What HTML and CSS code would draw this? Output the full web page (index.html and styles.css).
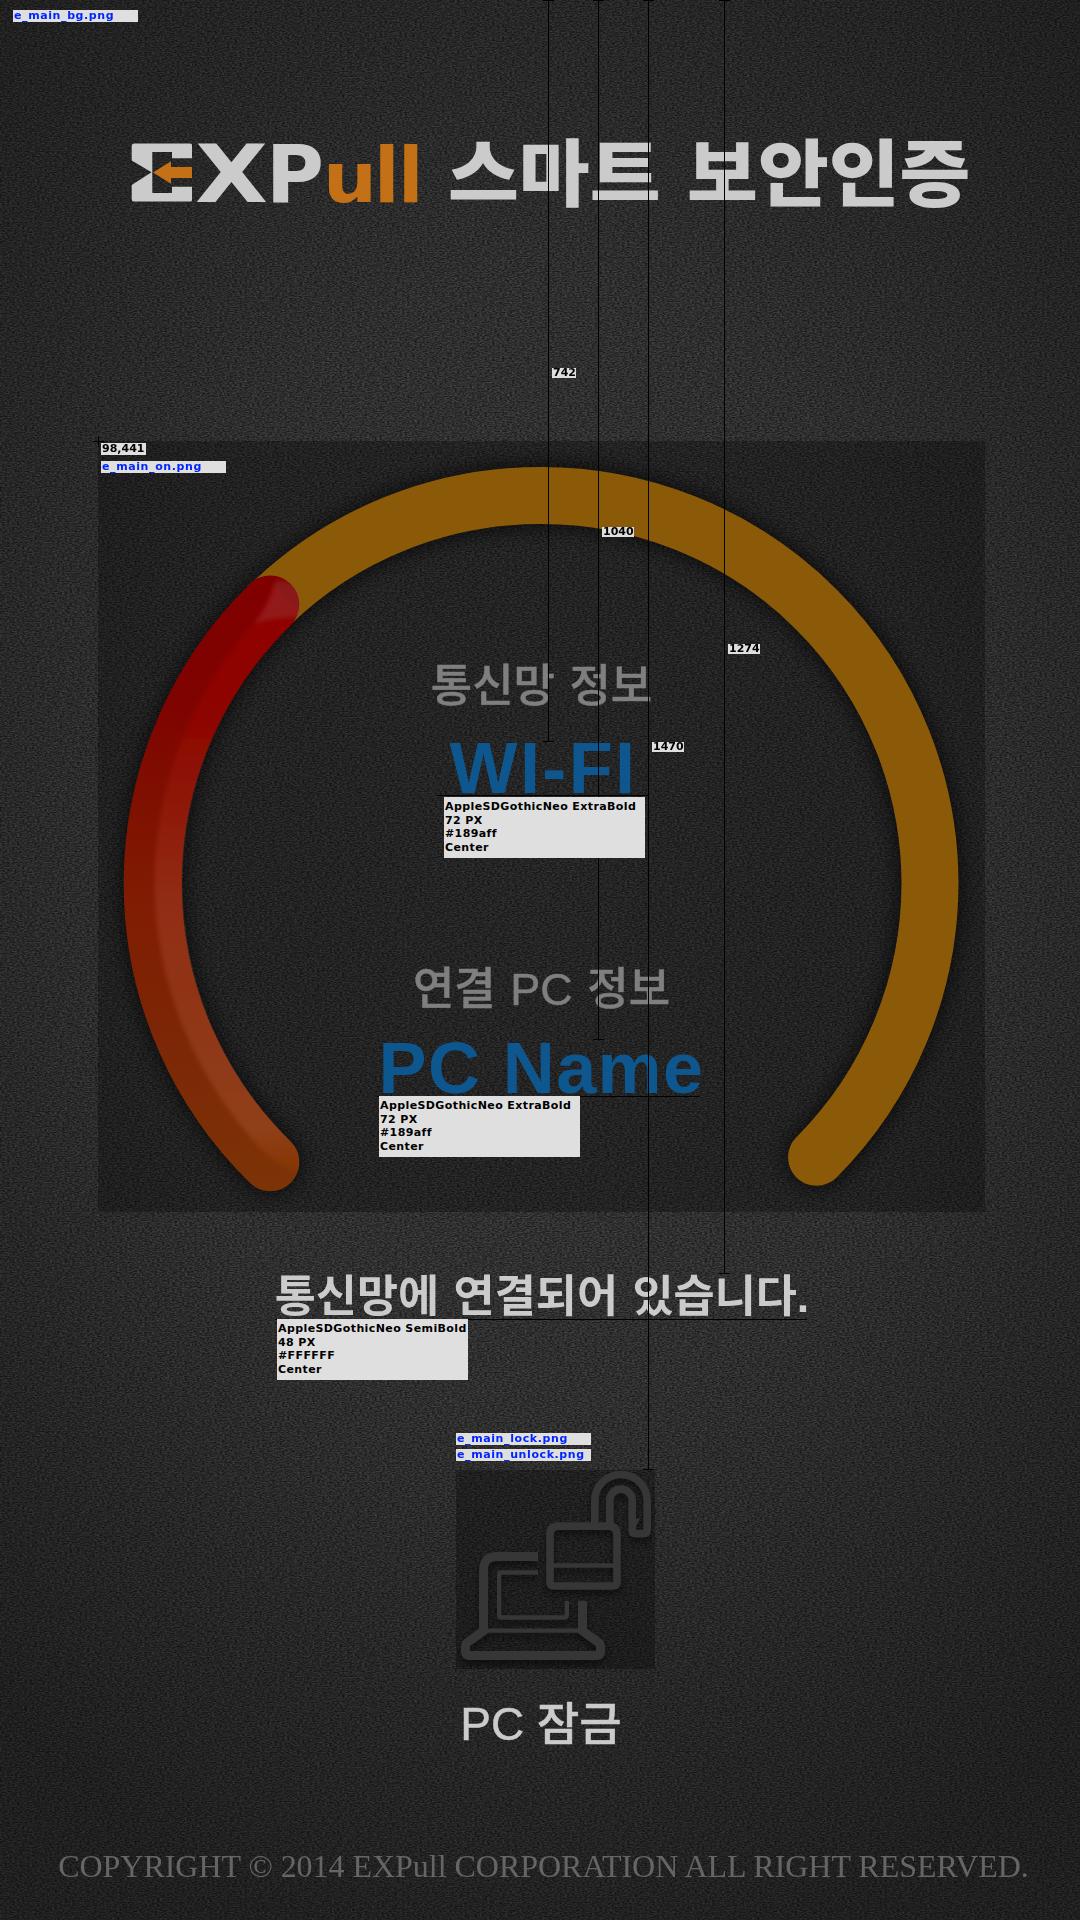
FILE: index.html
```html
<!DOCTYPE html>
<html lang="ko">
<head>
<meta charset="utf-8">
<title>EXPull 스마트 보안인증</title>
<link rel="stylesheet" href="styles.css">
</head>
<body>
<main class="screen">
  <svg class="grain" width="1080" height="1920" aria-hidden="true">
    <filter id="grain" x="0" y="0" width="100%" height="100%" color-interpolation-filters="sRGB">
      <feTurbulence type="fractalNoise" baseFrequency="0.4 0.8" numOctaves="2" seed="4"/>
      <feColorMatrix type="matrix" values="2 0 0 0 -.5  2 0 0 0 -.5  2 0 0 0 -.5  0 0 0 0 1"/>
    </filter>
    <rect width="1080" height="1920" filter="url(#grain)"/>
  </svg>

  <header class="title">
    <svg class="logo" width="288" height="64" viewBox="131 140 288 64" aria-label="EXPull">
      <path class="logo-light" d="M134 143.5H190.500Q192 143.500 192 145V158.300H172V152H152.300V193H172V186.700H192V200Q192 201.500 190.500 201.500H134Q131.700 201.500 131.700 199V185L151.500 172.300L131.700 160.500V146Q131.700 143.500 134 143.500Z"/>
      <path class="logo-orange" d="M153 172.500L171 161.300V167H192V178H171V183.700Z"/>
      <g class="logo-type">
        <text class="logo-light" x="195" y="201.500" font-size="79.500" textLength="73" lengthAdjust="spacingAndGlyphs">X</text>
        <text class="logo-light" x="266" y="201.500" font-size="79.500" textLength="58" lengthAdjust="spacingAndGlyphs">P</text>
        <text class="logo-orange" x="323" y="201.500" font-size="70" textLength="54" lengthAdjust="spacingAndGlyphs">u</text>
        <text class="logo-orange" x="374" y="201.500" font-size="76.500" textLength="25.500" lengthAdjust="spacingAndGlyphs">l</text>
        <text class="logo-orange" x="398" y="201.500" font-size="76.500" textLength="25.500" lengthAdjust="spacingAndGlyphs">l</text>
      </g>
    </svg>
    <h1 class="title-text">스마트 보안인증</h1>
  </header>

  <section class="gauge">
    <svg class="ring" width="887" height="771" viewBox="98 441 887 771" aria-hidden="true">
      <defs>
        <linearGradient id="heat" gradientUnits="userSpaceOnUse" x1="0" y1="575" x2="0" y2="1192">
          <stop offset="0" stop-color="#800000"/><stop offset=".2" stop-color="#7f0300"/>
          <stop offset=".52" stop-color="#801c02"/><stop offset=".8" stop-color="#7c2906"/>
          <stop offset="1" stop-color="#7c3407"/>
        </linearGradient>
        <linearGradient id="gloss" gradientUnits="userSpaceOnUse" x1="0" y1="575" x2="0" y2="1192">
          <stop offset="0" stop-color="#ff0000" stop-opacity=".12"/><stop offset=".17" stop-color="#ff0000" stop-opacity=".12"/>
          <stop offset=".36" stop-color="#ff5040" stop-opacity=".11"/><stop offset=".52" stop-color="#ff9080" stop-opacity=".14"/>
          <stop offset=".9" stop-color="#ffa080" stop-opacity=".15"/><stop offset=".96" stop-color="#ff7000" stop-opacity=".08"/>
          <stop offset="1" stop-color="#ff7000" stop-opacity="0"/>
        </linearGradient>
        <filter id="shade" x="-10%" y="-10%" width="120%" height="120%"><feGaussianBlur stdDeviation="11"/></filter>
        <filter id="soft"><feGaussianBlur stdDeviation="2"/></filter>
        <clipPath id="arm"><path d="M249.500 584A29 29 0 1 1 291.500 625A361 361 0 0 0 291.500 1142A29 29 0 1 1 249.500 1182A418 418 0 0 1 249.500 584Z"/></clipPath>
      </defs>
      <path class="ring-shadow" filter="url(#shade)" d="M270.300 1162.300A388.500 388.500 0 0 1 541.500 495.500A388.500 388.500 0 0 1 930 884A388.500 388.500 0 0 1 816.500 1157.300"/>
      <path class="ring-track" d="M270.300 604.500A388.500 388.500 0 0 1 541.500 495.500A388.500 388.500 0 0 1 930 884A388.500 388.500 0 0 1 816.500 1157.300"/>
      <path class="ring-value" d="M270.300 604.500A389.500 389.500 0 0 0 270.300 1162.300"/>
      <g clip-path="url(#arm)">
        <path class="ring-gloss" filter="url(#soft)" d="M274 583Q266 607 255 621C110 790 130 1010 264 1152Q280 1168 305 1174L330 1130C180 990 150 790 305 620Z"/>
        <path class="ring-spark" filter="url(#soft)" d="M276 580Q269 606 254 624Q275 616 306 617V585Z"/>
      </g>
    </svg>
    <div class="readout">
      <p class="label">통신망 정보</p>
      <p class="value value-net">WI-FI</p>
      <p class="label label-pc">연결 PC 정보</p>
      <p class="value value-pc">PC Name</p>
    </div>
  </section>

  <p class="status">통신망에 연결되어 있습니다.</p>

  <section class="lock">
    <svg class="lock-icon" width="199" height="199" viewBox="48 150 597 597" aria-hidden="true">
      <g class="lock-lines">
        <path stroke-width="27" d="M294 409.500H172Q130.500 409.500 130.500 450V633L82 668Q76.500 673 76.500 680V696Q76.500 706.500 87 706.500H471Q481.500 706.500 481.500 696V680Q481.500 673 476 668L427.500 633V543"/>
        <path stroke-width="13" d="M294 457.500H184Q177.500 457.500 177.500 464V586Q177.500 592.500 184 592.500H374Q380.500 592.500 380.500 586V543"/>
        <path stroke-width="13" d="M130 632H428M335 436.500H525"/>
        <path stroke-width="23" d="M356 318.500H505Q531 318.500 531 345V486Q531 498 519 498H342Q330 498 330 486V345Q330 318.500 356 318.500Z"/>
        <path stroke-width="23" d="M464.500 318V242A78.500 78.500 0 0 1 621.500 242V330Q621.500 341 610 341H588Q576.500 341 576.500 330V241A33.500 33.500 0 0 0 509.500 241V318"/>
        <path class="lock-nick" d="M587 297L600 294L587 323Z"/>
      </g>
    </svg>
    <p class="lock-label">PC 잠금</p>
  </section>

  <footer class="copyright">COPYRIGHT © 2014 EXPull CORPORATION ALL RIGHT RESERVED.</footer>

  <svg class="guides" width="1080" height="1920" aria-hidden="true">
    <path d="M548.500 0V741M543 .5H554M543 741.500H554M598.500 0V1039M593 .5H604M593 1039.500H604M648.500 0V1469M643 .5H654M643 1469.500H654M724.500 0V1273M719 .5H730M719 1273.500H730M437 795.500H648M377 1096.500H699M275 1319.500H807M93 441.500H104M98.500 436V447"/>
  </svg>
  <span class="tag file tag-bg">e_main_bg.png</span>
  <span class="tag tag-origin">98,441</span>
  <span class="tag file tag-on">e_main_on.png</span>
  <span class="tag size tag-742">742</span>
  <span class="tag size tag-1040">1040</span>
  <span class="tag size tag-1274">1274</span>
  <span class="tag size tag-1470">1470</span>
  <div class="spec spec-net">AppleSDGothicNeo ExtraBold<br>72 PX<br>#189aff<br>Center</div>
  <div class="spec spec-pc">AppleSDGothicNeo ExtraBold<br>72 PX<br>#189aff<br>Center</div>
  <div class="spec spec-status">AppleSDGothicNeo SemiBold<br>48 PX<br>#FFFFFF<br>Center</div>
  <span class="tag file tag-lock">e_main_lock.png</span>
  <span class="tag file tag-unlock">e_main_unlock.png</span>
</main>
</body>
</html>
```

FILE: styles.css
```css
* { box-sizing: border-box; }
body { margin: 0; background: #222; }
p, h1 { margin: 0; font-weight: inherit; }

.screen {
  position: relative;
  display: flex;
  flex-direction: column;
  align-items: center;
  width: 1080px;
  height: 1920px;
  overflow: hidden;
  background: radial-gradient(ellipse 800px 1150px at 540px 850px, #333 0%, #2e2e2e 50%, #262626 75%, #1f1f1f 100%);
  font-family: "Liberation Sans", "Noto Sans CJK KR", sans-serif;
  white-space: nowrap;
}
.grain { position: absolute; inset: 0; mix-blend-mode: overlay; opacity: .42; pointer-events: none; }

.title { display: flex; align-self: stretch; height: 441px; padding: 140px 0 0 131px; gap: 28px; z-index: 1; }
.logo { flex: none; overflow: visible; }
.logo-light { fill: #cbcbcb; }
.logo-orange { fill: #c47017; }
.logo-type { font-family: "DejaVu Sans", sans-serif; font-weight: 700; }
.title-text {
  height: 64px;
  font: 900 77px/64px "Noto Sans CJK KR", sans-serif;
  word-spacing: 5px;
  color: #cbcbcb;
  transform: translate(1px, -3px) scaleY(.95);
}

.gauge { position: relative; width: 887px; height: 771px; margin-left: 3px; background: rgba(0, 0, 0, .27); }
.ring { position: absolute; inset: 0; }
.ring path { fill: none; }
.ring .ring-shadow { stroke: rgba(0, 0, 0, .75); stroke-width: 60; stroke-linecap: round; }
.ring .ring-track { stroke: #8b5a09; stroke-width: 57; stroke-linecap: round; }
.ring .ring-value { stroke: url(#heat); stroke-width: 58; stroke-linecap: round; }
.ring .ring-gloss { fill: url(#gloss); }
.ring .ring-spark { fill: rgba(150, 60, 60, .4); }

.readout { position: relative; display: flex; flex-direction: column; align-items: center; padding-top: 222px; }
.label { font-size: 45px; font-weight: 500; line-height: 48px; word-spacing: 2px; color: #7f7f7f; -webkit-text-stroke: .5px #7f7f7f; }
.value { font-size: 72px; font-weight: 700; line-height: 56px; color: #0e568e; letter-spacing: 1.4px; }
.value-net { margin-top: 29px; padding-left: 4px; letter-spacing: 2.4px; }
.label-pc { margin-top: 170px; }
.value-pc { margin-top: 26px; }

.status { margin: 61px 0 0 4px; font-size: 44.700px; font-weight: 600; line-height: 48px; word-spacing: 2px; color: #cbcbcb; z-index: 1; }

.lock { display: flex; flex-direction: column; align-items: center; margin: 150px 0 0 31px; z-index: 1; }
.lock-icon { margin-top: -1px; background: rgba(0, 0, 0, .28); }
.lock-lines { fill: none; stroke: #363636; filter: drop-shadow(0 14px 10px rgba(0, 0, 0, .45)); }
.lock-nick { fill: #363636; stroke: none; }
.lock-label { margin: 31px 0 0 -29px; font-size: 46px; font-weight: 500; line-height: 48px; color: #cbcbcb; -webkit-text-stroke: .5px #cbcbcb; }

.copyright { margin: 98px 0 0 7px; font: 32px/40px "Liberation Serif", serif; letter-spacing: -.03px; color: #656565; z-index: 1; }

.guides { position: absolute; inset: 0; fill: none; stroke: #000; z-index: 2; shape-rendering: crispEdges; }

.tag, .spec {
  position: absolute;
  z-index: 3;
  background: #dfdfdf;
  color: #000;
  font: 700 11px/12px "DejaVu Sans", sans-serif;
}
.tag { height: 12px; padding-left: 1px; }
.file { width: 125px; color: #0026ff; letter-spacing: .6px; }
.size { height: 10px; line-height: 10px; }
.spec { width: 201px; height: 61px; padding: 3px 0 0 1px; line-height: 13.5px; letter-spacing: .4px; }
.tag-bg { left: 13px; top: 10px; }
.tag-origin { left: 101px; top: 443px; width: 45px; }
.tag-on { left: 101px; top: 461px; }
.tag-742 { left: 552px; top: 368px; width: 24px; }
.tag-1040 { left: 602px; top: 527px; width: 32px; }
.tag-1274 { left: 728px; top: 644px; width: 32px; }
.tag-1470 { left: 652px; top: 742px; width: 32px; }
.tag-lock { left: 456px; top: 1433px; width: 135px; }
.tag-unlock { left: 456px; top: 1449px; width: 135px; }
.spec-net { left: 444px; top: 797px; }
.spec-pc { left: 379px; top: 1096px; }
.spec-status { left: 277px; top: 1319px; width: 191px; }
```
